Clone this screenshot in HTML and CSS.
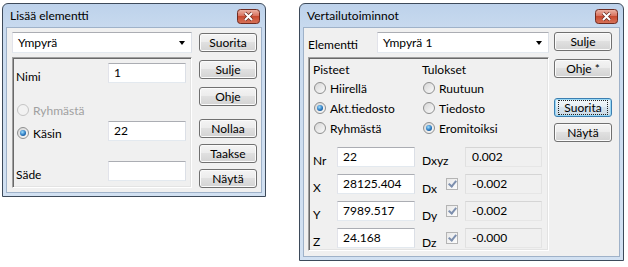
FILE: index.html
```html
<!DOCTYPE html>
<html lang="fi">
<head>
    <meta charset="UTF-8">
    <meta name="viewport" content="width=device-width, initial-scale=1.0">
    <title>Lisää elementti / Vertailutoiminnot</title>
    <link rel="stylesheet" href="styles.css">
</head>
<body>
<div class="desktop">

    <!-- Lisää elementti -->
    <div class="window add-window">
        <div class="titlebar">
            <span class="title">Lisää elementti</span>
            <svg class="close-btn" width="23" height="15" viewBox="0 0 23 15">
                <defs>
                    <linearGradient id="closeA" x1="0" y1="0" x2="0" y2="1">
                        <stop offset="0" stop-color="#ecb6a9"/>
                        <stop offset="0.45" stop-color="#d9735f"/>
                        <stop offset="0.5" stop-color="#c84a30"/>
                        <stop offset="1" stop-color="#d8745a"/>
                    </linearGradient>
                </defs>
                <rect x="0.5" y="0.5" width="22" height="14" rx="3" fill="url(#closeA)" stroke="#6e2b21"/>
                <path d="M8 4 L15 11 M15 4 L8 11" stroke="#6a2a20" stroke-width="3.4"/>
                <path d="M8 4 L15 11 M15 4 L8 11" stroke="#fff" stroke-width="2"/>
            </svg>
        </div>
        <div class="client add-client">
            <div class="add-main">
                <div class="combo add-combo"><span>Ympyrä</span><span class="combo-arrow"></span></div>
                <div class="group add-group">
                    <div class="add-row row-nimi">
                        <span class="label">Nimi</span>
                        <span class="edit">1</span>
                    </div>
                    <div class="add-row row-ryhma">
                        <span class="radio disabled"><span class="rb"></span>Ryhmästä</span>
                    </div>
                    <div class="add-row row-kasin">
                        <span class="radio"><span class="rb checked"></span>Käsin</span>
                        <span class="edit">22</span>
                    </div>
                    <div class="add-row row-sade">
                        <span class="label">Säde</span>
                        <span class="edit"></span>
                    </div>
                </div>
            </div>
            <div class="btn-col add-btns">
                <button type="button" class="btn">Suorita</button>
                <button type="button" class="btn">Sulje</button>
                <button type="button" class="btn">Ohje</button>
                <button type="button" class="btn btn-sep">Nollaa</button>
                <button type="button" class="btn">Taakse</button>
                <button type="button" class="btn">Näytä</button>
            </div>
        </div>
    </div>

    <!-- Vertailutoiminnot -->
    <div class="window cmp-window">
        <div class="titlebar">
            <span class="title">Vertailutoiminnot</span>
            <svg class="close-btn" width="23" height="15" viewBox="0 0 23 15">
                <defs>
                    <linearGradient id="closeB" x1="0" y1="0" x2="0" y2="1">
                        <stop offset="0" stop-color="#ecb6a9"/>
                        <stop offset="0.45" stop-color="#d9735f"/>
                        <stop offset="0.5" stop-color="#c84a30"/>
                        <stop offset="1" stop-color="#d8745a"/>
                    </linearGradient>
                </defs>
                <rect x="0.5" y="0.5" width="22" height="14" rx="3" fill="url(#closeB)" stroke="#6e2b21"/>
                <path d="M8 4 L15 11 M15 4 L8 11" stroke="#6a2a20" stroke-width="3.4"/>
                <path d="M8 4 L15 11 M15 4 L8 11" stroke="#fff" stroke-width="2"/>
            </svg>
        </div>
        <div class="client cmp-client">
            <div class="cmp-main">
                <div class="elem-row">
                    <span class="label">Elementti</span>
                    <div class="combo cmp-combo"><span>Ympyrä 1</span><span class="combo-arrow"></span></div>
                </div>
                <div class="group cmp-group">
                    <div class="opts">
                        <span class="head">Pisteet</span>
                        <span class="head">Tulokset</span>
                        <span class="radio"><span class="rb"></span>Hiirellä</span>
                        <span class="radio"><span class="rb"></span>Ruutuun</span>
                        <span class="radio"><span class="rb checked"></span>Akt.tiedosto</span>
                        <span class="radio"><span class="rb"></span>Tiedosto</span>
                        <span class="radio"><span class="rb"></span>Ryhmästä</span>
                        <span class="radio"><span class="rb checked"></span>Eromitoiksi</span>
                    </div>
                    <div class="fields">
                        <span class="label">Nr</span>
                        <span class="edit">22</span>
                        <span class="label label-d dxyz">Dxyz</span>
                        <span class="edit readonly">0.002</span>

                        <span class="label">X</span>
                        <span class="edit">28125.404</span>
                        <span class="label label-d">Dx</span>
                        <span class="check"></span>
                        <span class="edit readonly">-0.002</span>

                        <span class="label">Y</span>
                        <span class="edit">7989.517</span>
                        <span class="label label-d">Dy</span>
                        <span class="check"></span>
                        <span class="edit readonly">-0.002</span>

                        <span class="label">Z</span>
                        <span class="edit">24.168</span>
                        <span class="label label-d">Dz</span>
                        <span class="check"></span>
                        <span class="edit readonly">-0.000</span>
                    </div>
                </div>
            </div>
            <div class="btn-col cmp-btns">
                <button type="button" class="btn">Sulje</button>
                <button type="button" class="btn">Ohje *</button>
                <button type="button" class="btn btn-default btn-gap"><span class="focus">Suorita</span></button>
                <button type="button" class="btn">Näytä</button>
            </div>
        </div>
    </div>

</div>
</body>
</html>
```

FILE: styles.css
```css
body {
    margin: 0;
    background-color: #fff;
    font-family: Lato, "Open Sans", sans-serif;
    font-size: 12px;
    color: #000;
}

.desktop {
    display: flex;
    align-items: flex-start;
    padding: 3px 0 0 2px;
}

/* window frame */

.window {
    box-sizing: border-box;
    display: flex;
    flex-direction: column;
    border: 1px solid #3d4a5a;
    border-radius: 6px 6px 0 0;
    padding: 0 3px 3px;
    background: linear-gradient(#bdd2eb, #cadbef 28px, #d2e1f2);
}

.add-window {
    width: 264px;
    height: 194px;
}

.cmp-window {
    width: 325px;
    height: 258px;
    margin-left: 33px;
}

.titlebar {
    height: 23px;
    display: flex;
    align-items: center;
    justify-content: space-between;
    padding: 0 2px 0 4px;
}

.title {
    line-height: 16px;
    margin-top: 1px;
}

.close-btn {
    display: block;
    margin-top: 1px;
}

.client {
    flex: 1;
    display: flex;
    background-color: #f0f0f0;
    border: 1px solid #9fb2c9;
}

.add-client {
    padding: 4px 0 0 5px;
    gap: 7px;
}

.cmp-client {
    padding: 4px 0 0 4px;
    gap: 5px;
}

/* controls */

.combo {
    box-sizing: border-box;
    height: 21px;
    display: flex;
    align-items: center;
    justify-content: space-between;
    padding: 0 6px 1px 5px;
    background-color: #fff;
    border: 1px solid #abadb3;
    border-color: #abadb3 #dbdfe6 #e3e9ef #e2e3ea;
}

.combo-arrow {
    width: 0;
    height: 0;
    border-top: 4px solid #000;
    border-left: 3.5px solid transparent;
    border-right: 3.5px solid transparent;
    margin-top: 1px;
}

.add-combo {
    width: 180px;
}

.group {
    box-sizing: border-box;
    border: 1px solid;
    border-color: #a0a0a0 #fff #fff #a0a0a0;
    box-shadow: inset 1px 1px 0 #696969, inset -1px -1px 0 #e3e3e3;
}

.edit {
    box-sizing: border-box;
    display: block;
    width: 78px;
    height: 20px;
    padding: 1px 0 0 5px;
    line-height: 15px;
    background-color: #fff;
    border: 1px solid;
    border-color: #abadb3 #dbdfe6 #e3e9ef #e2e3ea;
}

.edit.readonly {
    width: 77px;
    padding-left: 6px;
    background-color: #f0f0f0;
    border-color: #d5d5d5 #e3e3e3 #e6e6e6 #e0e0e0;
}

.label {
    line-height: 15px;
    padding-top: 6px;
}

.radio {
    display: flex;
    align-items: center;
    gap: 4px;
    height: 20px;
}

.radio.disabled {
    color: #a0a0a0;
}

.rb {
    position: relative;
    box-sizing: border-box;
    width: 12px;
    height: 12px;
    margin-left: 1px;
    border-radius: 50%;
    border: 1px solid #8e8f8f;
    background: linear-gradient(135deg, #d6d6d6, #fbfbfb);
}

.radio.disabled .rb {
    border-color: #c4c4c4;
    background: #f2f2f2;
}

.rb.checked::after {
    content: "";
    position: absolute;
    left: 2px;
    top: 2px;
    width: 6px;
    height: 6px;
    border-radius: 50%;
    background: radial-gradient(circle at 40% 35%, #9fe0ff, #2a78c0 55%, #0d3f72);
}

.check {
    box-sizing: border-box;
    width: 12px;
    height: 12px;
    margin-top: 4px;
    border: 1px solid #b4b4b4;
    background: linear-gradient(135deg, #e8e8e8, #fdfdfd);
    position: relative;
}

.check::after {
    content: "";
    position: absolute;
    left: 3px;
    top: 0px;
    width: 3px;
    height: 6px;
    border: solid #7d8fae;
    border-width: 0 2px 2px 0;
    transform: rotate(40deg);
}

.btn-col {
    display: flex;
    flex-direction: column;
    width: 58px;
}

.btn {
    box-sizing: border-box;
    width: 58px;
    height: 19px;
    padding: 0 0 1px;
    margin: 0;
    font-family: inherit;
    font-size: inherit;
    color: #000;
    line-height: 15px;
    border: 1px solid #707070;
    border-radius: 3px;
    background: linear-gradient(#f4f4f4, #ececec 45%, #e0e0e0 50%, #d3d3d3);
    box-shadow: inset 0 0 0 1px #fbfbfb;
}

.btn-default {
    border-color: #3c7fb1;
    background: linear-gradient(#f4f8fb, #e6eef4 45%, #d7e4ee 50%, #cbd9e4);
    box-shadow: inset 0 0 0 1px #98d8f6;
}

.focus {
    display: inline-block;
    padding: 0 5px;
    line-height: 13px;
    outline: 1px dotted #222;
}

/* Lisää elementti */

.add-main {
    width: 180px;
    display: flex;
    flex-direction: column;
    gap: 4px;
}

.add-group {
    height: 131px;
    padding: 5px 5px 0 3px;
    display: flex;
    flex-direction: column;
}

.add-row {
    display: flex;
    justify-content: space-between;
    align-items: flex-start;
    height: 20px;
}

.row-ryhma {
    margin-top: 17px;
}

.row-kasin {
    margin-top: 1px;
}

.row-kasin .radio {
    margin-top: 2px;
}

.row-sade {
    margin-top: 20px;
}

.add-btns {
    padding-top: 1px;
    gap: 8px;
}

.add-btns .btn-sep {
    margin-top: 5px;
}

.add-btns .btn-sep ~ .btn {
    margin-top: -2px;
}

/* Vertailutoiminnot */

.cmp-main {
    width: 241px;
    display: flex;
    flex-direction: column;
    gap: 4px;
}

.elem-row {
    display: flex;
    justify-content: space-between;
    height: 21px;
}

.elem-row .label {
    padding-top: 5px;
}

.cmp-combo {
    width: 172px;
}

.cmp-group {
    height: 194px;
    padding: 4px 0 0 4px;
}

.opts {
    display: grid;
    grid-template-columns: 109px 1fr;
    grid-template-rows: 16px 20px 20px 20px;
}

.head {
    line-height: 16px;
}

.fields {
    display: grid;
    grid-template-columns: 24px 85px 24px 19px 77px;
    grid-auto-rows: 20px;
    row-gap: 7px;
    margin-top: 9px;
}

.fields .label-d {
    padding-top: 7px;
}

.fields .dxyz {
    grid-column: span 2;
    padding-top: 6px;
}

.cmp-btns .btn:nth-child(2) {
    margin-top: 8px;
}

.cmp-btns .btn-gap {
    margin-top: 20px;
}

.cmp-btns .btn:nth-child(4) {
    margin-top: 6px;
}
```
